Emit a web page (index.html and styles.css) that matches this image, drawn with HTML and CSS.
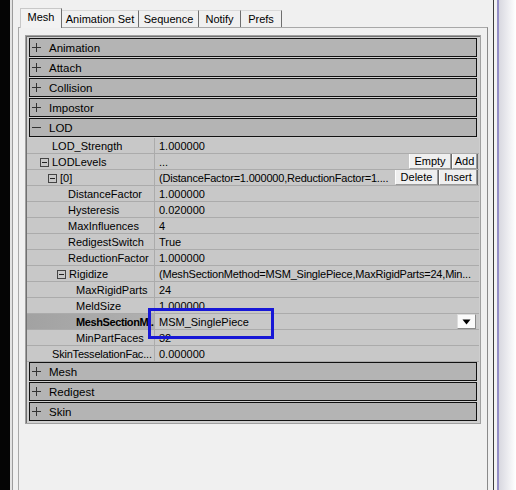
FILE: index.html
```html
<!DOCTYPE html>
<html>
<head>
<meta charset="utf-8">
<link rel="stylesheet" href="styles.css">
</head>
<body>
<div class="window">
  <div class="left-dark"></div>
  <div class="left-edge"></div>
  <div class="main">
    <div class="tabs">
      <div class="tab sel w-mesh">Mesh</div>
      <div class="tab w-anim">Animation Set</div>
      <div class="tab w-seq">Sequence</div>
      <div class="tab w-not">Notify</div>
      <div class="tab w-pref">Prefs</div>
    </div>
    <div class="panel">
      <div class="grid">
        <div class="cat"><svg class="ci" viewBox="0 0 9 9"><path d="M0 4.5H9M4.5 0V9" stroke="#333" stroke-width="1"/></svg><span>Animation</span></div>
        <div class="cat"><svg class="ci" viewBox="0 0 9 9"><path d="M0 4.5H9M4.5 0V9" stroke="#333" stroke-width="1"/></svg><span>Attach</span></div>
        <div class="cat"><svg class="ci" viewBox="0 0 9 9"><path d="M0 4.5H9M4.5 0V9" stroke="#333" stroke-width="1"/></svg><span>Collision</span></div>
        <div class="cat"><svg class="ci" viewBox="0 0 9 9"><path d="M0 4.5H9M4.5 0V9" stroke="#333" stroke-width="1"/></svg><span>Impostor</span></div>
        <div class="cat"><svg class="ci" viewBox="0 0 9 9"><path d="M0 4.5H10" stroke="#333" stroke-width="1"/></svg><span>LOD</span></div>
        <div class="props">
          <div class="prop"><div class="name l1">LOD_Strength</div><div class="val">1.000000</div></div>
          <div class="prop"><div class="name e1"><svg class="ex" viewBox="0 0 9 9"><rect x="0.5" y="0.5" width="8" height="8" fill="none" stroke="#444"/><path d="M2 4.5H7" stroke="#222"/></svg>LODLevels</div><div class="val"><span class="vt">...</span><span class="btn b-empty">Empty</span><span class="btn b-add">Add</span></div></div>
          <div class="prop"><div class="name e2"><svg class="ex" viewBox="0 0 9 9"><rect x="0.5" y="0.5" width="8" height="8" fill="none" stroke="#444"/><path d="M2 4.5H7" stroke="#222"/></svg>[0]</div><div class="val"><span class="vt tight">(DistanceFactor=1.000000,ReductionFactor=1....</span><span class="btn b-del">Delete</span><span class="btn b-ins">Insert</span></div></div>
          <div class="prop"><div class="name l3">DistanceFactor</div><div class="val">1.000000</div></div>
          <div class="prop"><div class="name l3">Hysteresis</div><div class="val">0.020000</div></div>
          <div class="prop"><div class="name l3">MaxInfluences</div><div class="val">4</div></div>
          <div class="prop"><div class="name l3">RedigestSwitch</div><div class="val">True</div></div>
          <div class="prop"><div class="name l3">ReductionFactor</div><div class="val">1.000000</div></div>
          <div class="prop"><div class="name e3"><svg class="ex" viewBox="0 0 9 9"><rect x="0.5" y="0.5" width="8" height="8" fill="none" stroke="#444"/><path d="M2 4.5H7" stroke="#222"/></svg>Rigidize</div><div class="val"><span class="vt tight">(MeshSectionMethod=MSM_SinglePiece,MaxRigidParts=24,Min...</span></div></div>
          <div class="prop"><div class="name l4">MaxRigidParts</div><div class="val">24</div></div>
          <div class="prop"><div class="name l4">MeldSize</div><div class="val">1.000000</div></div>
          <div class="prop selrow"><div class="name l4 bold">MeshSectionM...</div><div class="val"><span class="vt">MSM_SinglePiece</span><span class="dd"><svg viewBox="0 0 9 6" class="tri"><path d="M0.5 0.5H8.5L4.5 5.5Z" fill="#000"/></svg></span></div></div>
          <div class="prop"><div class="name l4">MinPartFaces</div><div class="val">32</div></div>
          <div class="prop"><div class="name l1 tight">SkinTesselationFac...</div><div class="val">0.000000</div></div>
        </div>
        <div class="cat"><svg class="ci" viewBox="0 0 9 9"><path d="M0 4.5H9M4.5 0V9" stroke="#333" stroke-width="1"/></svg><span>Mesh</span></div>
        <div class="cat"><svg class="ci" viewBox="0 0 9 9"><path d="M0 4.5H9M4.5 0V9" stroke="#333" stroke-width="1"/></svg><span>Redigest</span></div>
        <div class="cat"><svg class="ci" viewBox="0 0 9 9"><path d="M0 4.5H9M4.5 0V9" stroke="#333" stroke-width="1"/></svg><span>Skin</span></div>
      </div>
    </div>
  </div>
  <div class="right-edge">
    <div class="re-dark"></div>
    <div class="re-light"></div>
    <div class="re-purple"></div>
    <div class="re-fade"></div>
  </div>
</div>
<div class="highlight"></div>
</body>
</html>
```
FILE: styles.css
```css
html, body {
  margin: 0;
  padding: 0;
}
body {
  width: 516px;
  height: 490px;
  overflow: hidden;
  background: #f0f0f0;
  font-family: "Liberation Sans", Arial, sans-serif;
  font-size: 11px;
  color: #000;
  position: relative;
}
.window {
  display: flex;
  height: 490px;
}
.left-dark {
  width: 10px;
  background: #050505;
}
.left-edge {
  width: 2px;
  background: #e2e2e2;
  border-right: 1px solid #9c9c9c;
}
.main {
  width: 480px;
  padding: 8px 0 0 5px;
  box-sizing: border-box;
}
.tabs {
  display: flex;
  align-items: flex-end;
  padding-left: 2px;
  height: 19px;
  position: relative;
  z-index: 1;
}
.tab {
  height: 17px;
  box-sizing: border-box;
  border-top: 1px solid #d8d8d8;
  border-right: 1px solid #6e6e6e;
  background: #f0f0f0;
  text-align: center;
  line-height: 17px;
  white-space: nowrap;
}
.tab.sel {
  height: 20px;
  margin-bottom: -1px;
  border-top: 1px solid #c8c8c8;
  border-left: 1px solid #c8c8c8;
  border-right: 1px solid #6e6e6e;
  line-height: 16px;
  padding-bottom: 3px;
  background: #f2f2f2;
}
.w-mesh { width: 42px; }
.w-anim { width: 77px; }
.w-seq { width: 60px; }
.w-not { width: 42px; }
.w-pref { width: 41px; }
.panel {
  width: 470px;
  height: 470px;
  box-sizing: border-box;
  border: 1px solid #a8a8a8;
  border-right-color: #8a8a8a;
  background: #f0f0f0;
  padding: 7px 6px 0 6px;
}
.grid {
  border: 1px solid #a0a0a0;
  box-shadow: inset 1px 1px 0 #707070;
  background: #cfcfcf;
  padding: 2px 3px 1px 3px;
}
.cat {
  height: 19px;
  margin-bottom: 1px;
  box-sizing: border-box;
  border: 1px solid #111;
  background: #b4b4b4;
  display: flex;
  align-items: center;
  font-size: 11.5px;
}
.ci {
  width: 9px;
  height: 9px;
  margin-left: 2px;
  margin-right: 8px;
}
.props {
  margin: 0 -2px 0 -2px;
  background: #c8c8c8;
}
.prop {
  display: flex;
  height: 16px;
  box-sizing: border-box;
  border-bottom: 1px solid #ababab;
  line-height: 17px;
}
.name {
  width: 128px;
  flex: none;
  box-sizing: border-box;
  border-right: 1px solid #ababab;
  white-space: nowrap;
  overflow: hidden;
  display: flex;
  align-items: center;
  padding-top: 2px;
  line-height: 13px;
}
.l1 { padding-left: 25px; }
.l3 { padding-left: 41px; }
.l4 { padding-left: 49px; }
.e1 { padding-left: 13px; }
.e2 { padding-left: 21px; }
.e3 { padding-left: 30px; }
.ex {
  width: 9px;
  height: 9px;
  margin-right: 3px;
  margin-top: -1px;
  flex: none;
}
.tight {
  letter-spacing: -0.2px;
}
.bold {
  font-weight: bold;
  letter-spacing: -0.4px;
}
.selrow .name {
  background: linear-gradient(to right, #a2a2a2, #b0b0b0);
}
.val {
  flex: 1;
  display: flex;
  align-items: stretch;
  padding-left: 4px;
  white-space: nowrap;
  overflow: hidden;
}
.vt {
  flex: 1;
  overflow: hidden;
}
.btn {
  flex: none;
  box-sizing: border-box;
  height: 16px;
  margin-top: -1px;
  border: 1px solid #9a9a9a;
  border-top-color: #fdfdfd;
  border-left-color: #fdfdfd;
  box-shadow: 1px 1px 0 #6a6a6a;
  background: #efefef;
  text-align: center;
  line-height: 15px;
}
.b-empty { width: 42px; margin-right: 1px; }
.b-add { width: 25px; margin-right: 2px; }
.b-del { width: 43px; margin-right: 1px; }
.b-ins { width: 38px; margin-right: 2px; }
.dd {
  flex: none;
  width: 19px;
  height: 15px;
  box-sizing: border-box;
  margin-right: 3px;
  border: 1px solid #8a8a8a;
  border-top-color: #dcdcdc;
  border-left-color: #dcdcdc;
  background: #fafafa;
  display: flex;
  align-items: center;
  justify-content: center;
}
.tri {
  width: 9px;
  height: 6px;
}
.right-edge {
  flex: 1;
  display: flex;
}
.re-dark { width: 1px; background: #3a3a3a; }
.re-light { width: 3px; background: #f2f2f2; }
.re-purple { width: 2px; background: #958fc6; }
.re-fade {
  flex: 1;
  background: linear-gradient(to right, #d8d8e0, #ffffff);
}
.highlight {
  position: absolute;
  left: 148px;
  top: 308px;
  width: 126px;
  height: 31px;
  box-sizing: border-box;
  border: 3px solid #1717d6;
}
```
